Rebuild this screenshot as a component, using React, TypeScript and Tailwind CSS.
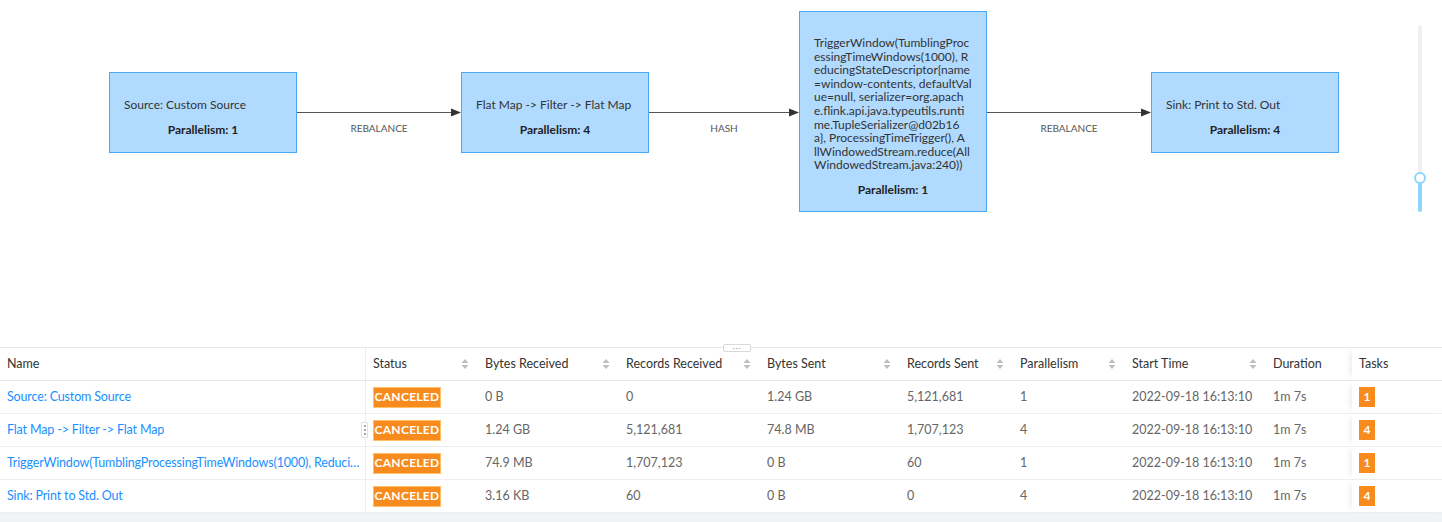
import React from "react";

type Node = {
  x: number;
  y: number;
  w: number;
  h: number;
  lines: string[];
  parallelism: number;
};

const nodes: Node[] = [
  { x: 109, y: 72, w: 188, h: 81, lines: ["Source: Custom Source"], parallelism: 1 },
  { x: 461, y: 72, w: 188, h: 81, lines: ["Flat Map -> Filter -> Flat Map"], parallelism: 4 },
  {
    x: 799,
    y: 11,
    w: 188,
    h: 201,
    lines: [
      "TriggerWindow(TumblingProc",
      "essingTimeWindows(1000), R",
      "educingStateDescriptor{name",
      "=window-contents, defaultVal",
      "ue=null, serializer=org.apach",
      "e.flink.api.java.typeutils.runti",
      "me.TupleSerializer@d02b16",
      "a}, ProcessingTimeTrigger(), A",
      "llWindowedStream.reduce(All",
      "WindowedStream.java:240))",
    ],
    parallelism: 1,
  },
  { x: 1151, y: 72, w: 188, h: 81, lines: ["Sink: Print to Std. Out"], parallelism: 4 },
];

const edges = [
  { x1: 297, x2: 461, label: "REBALANCE" },
  { x1: 649, x2: 799, label: "HASH" },
  { x1: 987, x2: 1151, label: "REBALANCE" },
];

const columns = [
  { title: "Name", sort: false },
  { title: "Status", sort: true },
  { title: "Bytes Received", sort: true },
  { title: "Records Received", sort: true },
  { title: "Bytes Sent", sort: true },
  { title: "Records Sent", sort: true },
  { title: "Parallelism", sort: true },
  { title: "Start Time", sort: true },
  { title: "Duration", sort: false },
  { title: "Tasks", sort: false },
];

// name column is cut with an ellipsis in the table
const rows = [
  ["Source: Custom Source", "0 B", "0", "1.24 GB", "5,121,681", "1", "1"],
  ["Flat Map -> Filter -> Flat Map", "1.24 GB", "5,121,681", "74.8 MB", "1,707,123", "4", "4"],
  ["TriggerWindow(TumblingProcessingTimeWindows(1000), Reduci…", "74.9 MB", "1,707,123", "0 B", "60", "1", "1"],
  ["Sink: Print to Std. Out", "3.16 KB", "60", "0 B", "0", "4", "4"],
];

const grid = "grid grid-cols-[366px_112px_141px_141px_140px_113px_112px_141px_86px_90px]";

function Sorter() {
  return (
    <svg width="8" height="12" viewBox="0 0 8 12" className="shrink-0">
      <path d="M4 1 L7.5 5 L0.5 5 Z" fill="#bfbfbf" />
      <path d="M4 11 L7.5 7 L0.5 7 Z" fill="#bfbfbf" />
    </svg>
  );
}

function Graph() {
  return (
    <div className="relative h-[347px] w-full overflow-hidden bg-white">
      <svg className="absolute left-0 top-0" width="1442" height="347">
        {edges.map((e, i) => (
          <g key={i}>
            <line x1={e.x1} y1="112.5" x2={e.x2 - 8} y2="112.5" stroke="#555" strokeWidth="1" />
            <path d={`M${e.x2} 112.5 L${e.x2 - 10} 108.5 L${e.x2 - 10} 116.5 Z`} fill="#333" />
          </g>
        ))}
      </svg>
      {edges.map((e, i) => (
        <div
          key={i}
          className="absolute top-[121px] -translate-x-1/2 text-[10px] leading-[14px] uppercase text-[#555]"
          style={{ left: (e.x1 + e.x2) / 2 }}
        >
          {e.label}
        </div>
      ))}
      {nodes.map((n, i) => (
        <div
          key={i}
          className="absolute flex flex-col justify-center border border-[#4aa8f7] bg-[#b1daff] pt-[10px] text-[12px] text-[#333]"
          style={{ left: n.x, top: n.y, width: n.w, height: n.h }}
        >
          <div className="px-[14px] leading-[13.6px] whitespace-nowrap">
            {n.lines.map((l, j) => (
              <div key={j}>{l}</div>
            ))}
          </div>
          <div className="mt-[11px] text-center font-bold leading-[14px] text-[#222]">
            Parallelism: {n.parallelism}
          </div>
        </div>
      ))}
      <div className="absolute left-[1418px] top-[25px] flex h-[187px] w-[4px] flex-col items-center rounded-full bg-[#f0f0f0]">
        <div className="mt-auto h-[34px] w-[4px] rounded-full bg-[#91d5ff]" />
      </div>
      <div className="absolute left-[1414px] top-[172px] h-[12px] w-[12px] rounded-full border-2 border-[#91d5ff] bg-white" />
    </div>
  );
}

function Table() {
  return (
    <div className="relative border-t border-[#e8e8e8] bg-white">
      <div className="absolute left-[723px] top-[-4px] flex h-[8px] w-[28px] items-center justify-center rounded-[2px] border border-[#d9d9d9] bg-white text-[8px] leading-none tracking-[1px] text-[#999]">
        ···
      </div>
      <div className={`${grid} h-[33px] border-b border-[#e8e8e8] text-[12.5px] text-[#333]`}>
        {columns.map((c, i) => (
          <div
            key={c.title}
            className={`flex items-center justify-between px-[7px] ${i === 0 ? "border-r border-[#ececec]" : ""} ${
              i === 9 ? "shadow-[-6px_0_6px_-4px_rgba(0,0,0,0.08)]" : ""
            }`}
          >
            <span>{c.title}</span>
            {c.sort && <span className="mr-[2px]"><Sorter /></span>}
          </div>
        ))}
      </div>
      {rows.map((r, ri) => (
        <div key={ri} className={`${grid} h-[33px] border-b border-[#eeeeee] text-[12.5px] text-[#666]`}>
          <div className="flex items-center border-r border-[#ececec] px-[7px] whitespace-nowrap tracking-[-0.15px]">
            <span className="text-[#1890ff]">{r[0]}</span>
          </div>
          <div className="relative flex items-center px-[7px]">
            {ri === 1 && (
              <div className="absolute left-[-5px] top-[8px] flex h-[16px] w-[7px] flex-col items-center justify-center gap-[2px] rounded-[1px] border border-[#e0e0e0] bg-white">
                <span className="h-[2px] w-[2px] rounded-full bg-[#888]" />
                <span className="h-[2px] w-[2px] rounded-full bg-[#888]" />
                <span className="h-[2px] w-[2px] rounded-full bg-[#888]" />
              </div>
            )}
            <span className="flex h-[21px] w-[68px] items-center justify-center border border-[#ffc069] bg-[#f78b1e] text-[12px] font-bold tracking-[0.3px] text-white">
              CANCELED
            </span>
          </div>
          {r.slice(1, 6).map((v, vi) => (
            <div key={vi} className="flex items-center px-[7px]">
              {v}
            </div>
          ))}
          <div className="flex items-center px-[7px]">2022-09-18 16:13:10</div>
          <div className="flex items-center px-[7px]">1m 7s</div>
          <div className="flex items-center px-[7px] shadow-[-6px_0_6px_-4px_rgba(0,0,0,0.08)]">
            <span className="flex h-[20px] w-[16px] items-center justify-center bg-[#f78b1e] text-[12px] font-bold text-white">
              {r[6]}
            </span>
          </div>
        </div>
      ))}
    </div>
  );
}

export default function App() {
  return (
    <div className="h-[522px] w-[1442px] overflow-hidden bg-[#f0f2f5] font-['Lato',_'Noto_Sans',_sans-serif]">
      <Graph />
      <Table />
    </div>
  );
}
